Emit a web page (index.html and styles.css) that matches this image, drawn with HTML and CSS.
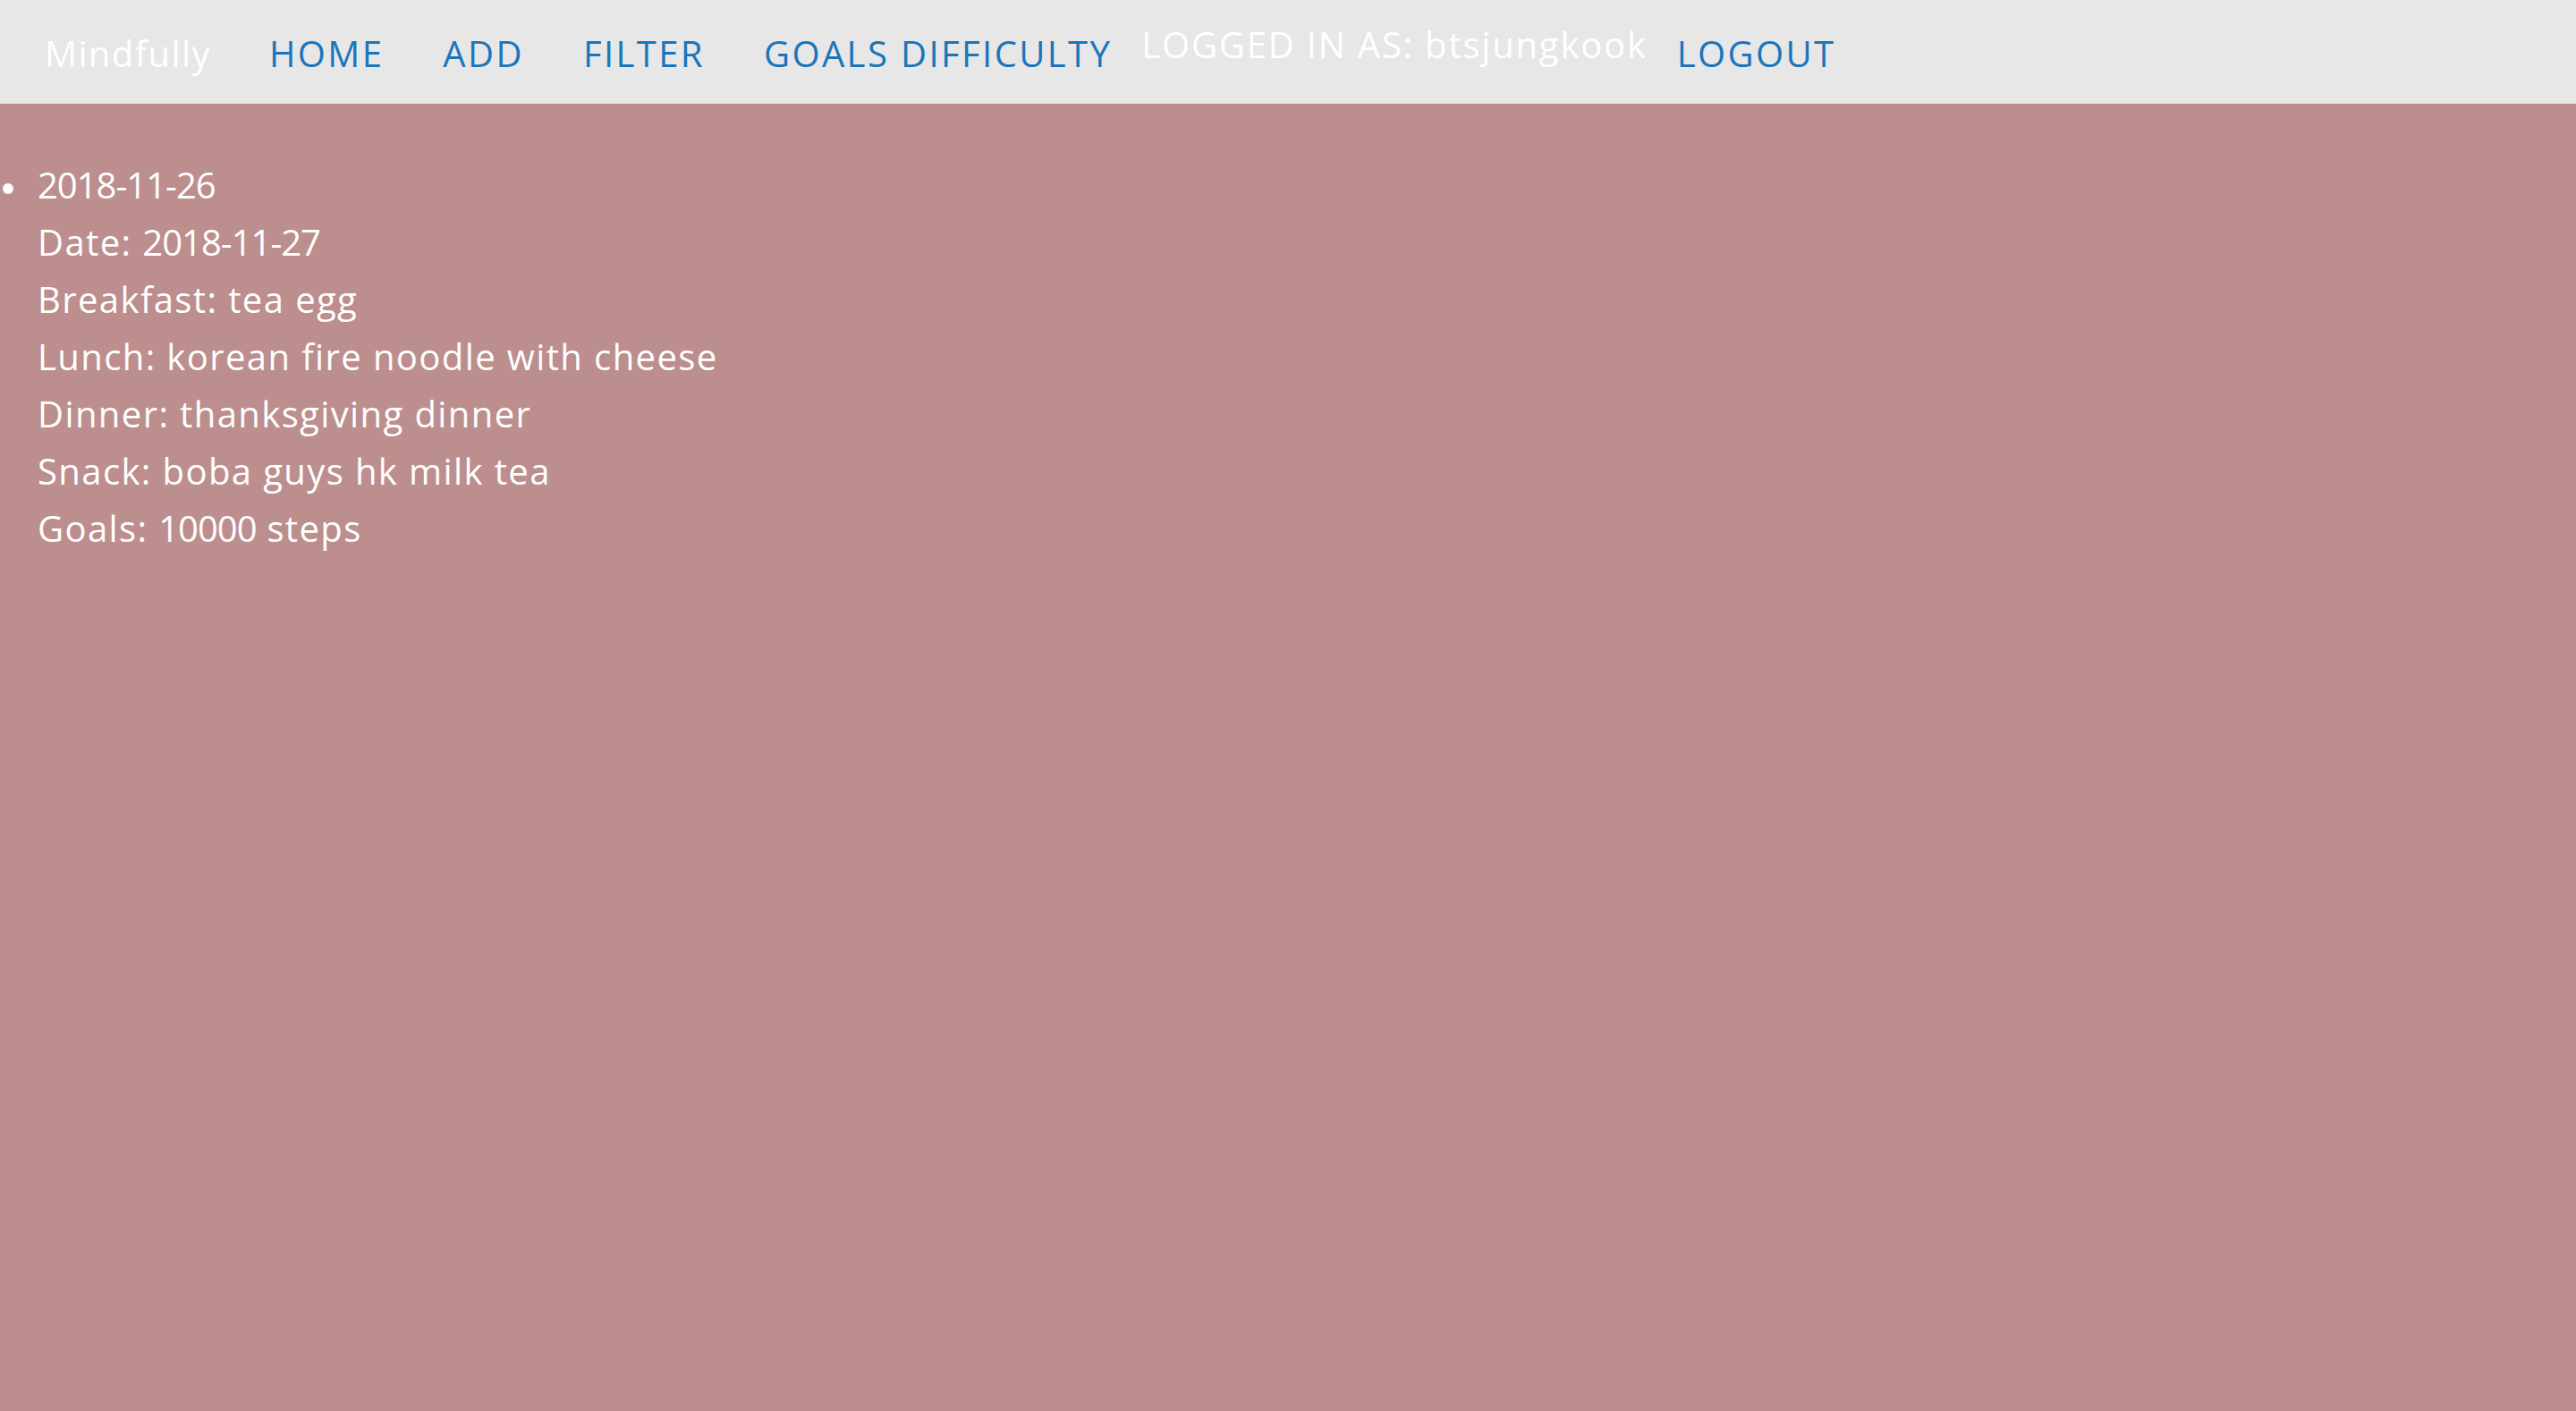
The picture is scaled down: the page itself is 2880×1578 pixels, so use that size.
FILE: index.html
```html
<!DOCTYPE html>
<html lang="en">
<head>
<meta charset="utf-8">
<title>Mindfully</title>
<link rel="stylesheet" href="styles.css">
</head>
<body>
<nav class="navbar">
  <a class="brand" href="#">Mindfully</a>
  <a class="nav-link" href="#">HOME</a>
  <a class="nav-link" href="#">ADD</a>
  <a class="nav-link" href="#">FILTER</a>
  <a class="nav-link" href="#">GOALS DIFFICULTY</a>
  <span class="logged">LOGGED IN AS: btsjungkook</span>
  <a class="nav-link" href="#">LOGOUT</a>
</nav>
<main class="content">
  <ul class="entries">
    <li class="entry">
      <div class="line"><span class="num">2018-11-26</span></div>
      <div class="line">Date: <span class="num">2018-11-27</span></div>
      <div class="line">Breakfast: tea egg</div>
      <div class="line">Lunch: korean fire noodle with cheese</div>
      <div class="line">Dinner: thanksgiving dinner</div>
      <div class="line">Snack: boba guys hk milk tea</div>
      <div class="line">Goals: <span class="num">10000</span> steps</div>
    </li>
  </ul>
</main>
</body>
</html>
```
FILE: styles.css
```css
html, body {
  margin: 0;
  padding: 0;
}
body {
  background: #bc8e8e;
  font-family: "Open Sans", "Liberation Sans", sans-serif;
  color: #ffffff;
  min-height: 1578px;
}
.navbar {
  display: flex;
  align-items: center;
  height: 116px;
  background: #e7e7e7;
  padding-left: 17px;
  box-sizing: border-box;
}
.navbar a {
  text-decoration: none;
}
.brand {
  color: #ffffff;
  font-size: 40px;
  padding: 0 32px 0 33px;
  font-weight: 500;
  letter-spacing: 1.4px;
  line-height: 1;
  margin-top: 3px;
}
.nav-link {
  color: #1b75bb;
  font-size: 40px;
  letter-spacing: 2.4px;
  padding: 0 33px 0 33px;
  line-height: 1;
  margin-top: 3px;
}
.logged {
  color: #ffffff;
  font-size: 40px;
  letter-spacing: 1.8px;
  line-height: 1;
  margin-top: -17px;
}
.content {
  padding-top: 59px;
}
.entries {
  margin: 0;
  padding-left: 42px;
  list-style: none;
}
.entry {
  position: relative;
  font-size: 40px;
  letter-spacing: 1.4px;
  line-height: 64px;
}
.entry::before {
  content: "";
  position: absolute;
  left: -39px;
  top: 30px;
  width: 12px;
  height: 12px;
  border-radius: 50%;
  background: #ffffff;
}
.num {
  letter-spacing: -1px;
}
```
